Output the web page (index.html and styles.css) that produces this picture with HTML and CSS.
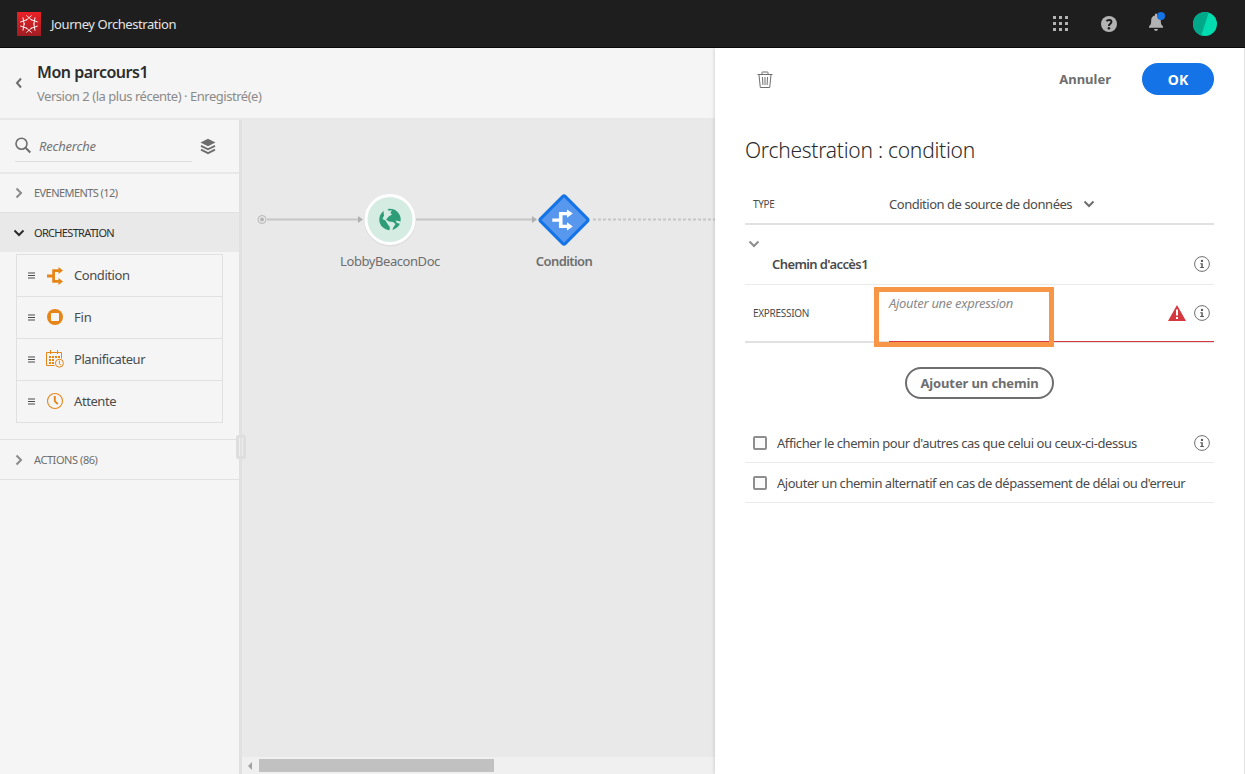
FILE: index.html
```html
<!DOCTYPE html>
<html lang="fr">
<head>
<meta charset="utf-8">
<title>Journey Orchestration</title>
<link rel="stylesheet" href="styles.css">
</head>
<body>
<svg class="defs" width="0" height="0">
  <symbol id="split" viewBox="0 0 18 18"><path d="M1 7.6h5.2V2.2h6.3V0L17 3.5 12.500 7V5H9v8h3.500v-2l4.500 3.500-4.500 3.500v-2.200H6.200v-5.400H1z"/></symbol>
  <symbol id="grip" viewBox="0 0 7 7"><path d="M0 1h7M0 3.500h7M0 6h7" stroke="#4b4b4b" stroke-width="1.100"/></symbol>
  <symbol id="info" viewBox="0 0 16 16"><circle cx="8" cy="8" r="7.400" fill="none" stroke="#6e6e6e"/><circle cx="8" cy="4.900" r="1.200" fill="#5a5a5a"/><path d="M6.200 7.200H8.800V11h1.100v1H6.200v-1h1.100V8.200H6.200z" fill="#5a5a5a"/></symbol>
  <symbol id="chev" viewBox="0 0 12 8"><path d="M1.500 1.500L6 6l4.500-4.500" fill="none" stroke="currentColor" stroke-width="2"/></symbol>
  <symbol id="chevr" viewBox="0 0 8 12"><path d="M1.500 1.500L6 6l-4.500 4.500" fill="none" stroke="currentColor" stroke-width="2"/></symbol>
</svg>
<header class="topbar">
  <svg class="logo" width="24" height="24" viewBox="0 0 24 24">
    <defs><linearGradient id="red" x1="0" y1="0" x2="0" y2="1"><stop offset="0" stop-color="#ed2127"/><stop offset="1" stop-color="#9f1d22"/></linearGradient></defs>
    <rect width="24" height="24" fill="url(#red)"/>
    <g fill="none" stroke="#fff" stroke-width=".85" stroke-linecap="round">
      <g id="arm"><path d="M9.600 3.700L14.700 8M14.400 3.700L9.300 8"/></g>
      <use href="#arm" transform="rotate(60 12 12)"/><use href="#arm" transform="rotate(120 12 12)"/><use href="#arm" transform="rotate(180 12 12)"/><use href="#arm" transform="rotate(240 12 12)"/><use href="#arm" transform="rotate(300 12 12)"/>
    </g>
  </svg>
  <span class="app-name">Journey Orchestration</span>
  <div class="tools">
    <svg width="16" height="16" viewBox="0 0 16 16" fill="#b3b3b3"><path d="M0 0h3v3H0zM6 0h3v3H6zM12 0h3v3h-3zM0 6h3v3H0zM6 6h3v3H6zM12 6h3v3h-3zM0 12h3v3H0zM6 12h3v3H6zM12 12h3v3h-3z"/></svg>
    <svg class="help" width="16" height="16" viewBox="0 0 16 16"><circle cx="8" cy="8" r="8" fill="#b3b3b3"/><path d="M5.500 5.200C6.700 3.400 10.400 3.400 10.400 5.900 10.400 7.700 7.900 7.900 7.900 10" fill="none" stroke="#1e1e1e" stroke-width="2"/><circle cx="7.900" cy="12.200" r="1.300" fill="#1e1e1e"/></svg>
    <svg class="bell" width="18" height="20" viewBox="0 0 18 20"><path d="M7 1.800h2v1.700c2.600.5 3.800 2.200 3.800 5 0 3.300.5 4.600 2.200 5.700v1.500H1v-1.500c1.700-1.100 2.200-2.400 2.200-5.700 0-2.800 1.200-4.500 3.800-5zM6 17h4c-.3 1.300-1 2-2 2s-1.700-.7-2-2z" fill="#b3b3b3"/><circle cx="13" cy="4" r="4" fill="#1473e6"/></svg>
    <svg class="avatar" width="24" height="24" viewBox="0 0 24 24"><circle cx="12" cy="12" r="12" fill="#00dcb0"/><path d="M15.800.6A12 12 0 1 0 8.200 23.400z" fill="#00a88a"/></svg>
  </div>
</header>
<div class="shell">
  <section class="work">
    <div class="journey-head">
      <svg class="back" width="8" height="12" viewBox="0 0 8 12"><path d="M6 1.500L2 6l4 4.500" fill="none" stroke="#6e6e6e" stroke-width="2"/></svg>
      <div class="titles"><h1>Mon parcours1</h1><p>Version 2 (la plus récente) · Enregistré(e)</p></div>
    </div>
    <div class="body">
      <aside class="sidebar">
        <div class="search">
          <div class="field">
            <svg width="17" height="17" viewBox="0 0 17 17" fill="none" stroke="#6e6e6e"><circle cx="6.500" cy="6.700" r="5.500" stroke-width="1.600"/><path d="M10.500 10.700l4.800 4.800" stroke-width="2"/></svg>
            <span class="ph">Recherche</span>
          </div>
          <svg class="layers" width="16" height="17" viewBox="0 0 16 17"><path d="M8 .8L15.500 4.500 8 8.200.5 4.500z" fill="#6e6e6e"/><path d="M1 7.900l7 3.400 7-3.400M1 11.700l7 3.400 7-3.400" fill="none" stroke="#6e6e6e" stroke-width="1.900"/></svg>
        </div>
        <div class="group events"><svg width="8" height="12"><use href="#chevr"/></svg><span>EVENEMENTS (12)</span></div>
        <div class="group open"><svg width="12" height="8"><use href="#chev"/></svg><span>ORCHESTRATION</span></div>
        <div class="list">
          <div class="item"><svg width="7" height="7"><use href="#grip"/></svg><svg class="ic" width="18" height="18" fill="#e68619"><use href="#split"/></svg><span>Condition</span></div>
          <div class="item"><svg width="7" height="7"><use href="#grip"/></svg><svg class="ic" width="18" height="18" viewBox="0 0 18 18"><circle cx="9" cy="9" r="8" fill="#e68619"/><rect x="5" y="5" width="8" height="8" rx=".8" fill="#f5f5f5"/></svg><span class="short">Fin</span></div>
          <div class="item"><svg width="7" height="7"><use href="#grip"/></svg><svg class="ic" width="18" height="18" viewBox="0 0 18 18"><path d="M8.500 15.500h-8v-13h15v6M4.500 0v4M11.500 0v4" fill="none" stroke="#e68619"/><path d="M3 6h2v2H3zM6 6h2v2H6zM9 6h2v2H9zM12 6h2v2h-2zM3 9h2v2H3zM6 9h2v2H6zM3 12h2v2H3zM6 12h2v2H6z" fill="#e68619"/><circle cx="13.400" cy="13.200" r="4" fill="#f5f5f5" stroke="#e68619"/><path d="M13.400 10.500v3l1.500 1.800" fill="none" stroke="#e68619"/></svg><span>Planificateur</span></div>
          <div class="item"><svg width="7" height="7"><use href="#grip"/></svg><svg class="ic" width="18" height="18" viewBox="0 0 18 18"><circle cx="9" cy="9" r="7.500" fill="none" stroke="#e68619" stroke-width="1.100"/><path d="M8.800 4v5.200l3 3" fill="none" stroke="#e68619" stroke-width="1.900"/></svg><span>Attente</span></div>
        </div>
        <div class="group actions"><svg width="8" height="12"><use href="#chevr"/></svg><span>ACTIONS (86)</span></div>
        <div class="handle"></div>
      </aside>
      <main class="canvas">
        <svg class="graph" width="473" height="637" viewBox="242 120 473 637">
          <g stroke="#c6c6c6" stroke-width="2"><path d="M267 219.500h93M415 219.500h118"/><path d="M593 219.500h122" stroke-dasharray="3 2"/></g>
          <circle cx="262" cy="219.500" r="4" fill="none" stroke="#b5b5b5"/><circle cx="262" cy="219.500" r="2" fill="#b5b5b5"/>
          <path d="M358 216l5 3.500-5 3.500zM532 216l5 3.500-5 3.500z" fill="#b0b0b0"/>
          <circle cx="390" cy="220.500" r="26" fill="#dedede"/><circle cx="390" cy="219.500" r="24" fill="#d5ece3" stroke="#fff" stroke-width="3"/>
          <circle cx="390" cy="219.500" r="10.700" fill="#2d9d78"/>
          <path d="M384 208h5l-1.500 2 2 .8 2.300-.8-1.300 3 1.500 1.500-3 1.800-3 3.200 3 2 4 .5 2.500 2-2.500 4-1 3.500h-2.500l.3-4.500-2.300-3-2-3.500-3-1.500 1.500-3.500-.5-4zM395.500 220.500l5.500 1-1 2.200-3-.7zM386.500 211.500l2 2-1.500 1.500z" fill="#d5ece3"/>
          <rect x="546.500" y="202.500" width="35" height="35" rx="2" transform="rotate(45 564 220)" fill="#5798ee" stroke="#1473e6" stroke-width="3"/>
          <g transform="translate(551 209.500) scale(1.280 1.170)" fill="#fff"><use href="#split" width="18" height="18"/></g>
        </svg>
        <span class="node-label beacon">LobbyBeaconDoc</span>
        <span class="node-label cond">Condition</span>
        <div class="scroll"><svg width="5" height="8" viewBox="0 0 5 8"><path d="M5 0v8L1 4z" fill="#a3a3a3"/></svg><div class="thumb"></div></div>
      </main>
    </div>
  </section>
  <section class="panel">
    <div class="actions-row">
      <svg class="trash" width="16" height="18" viewBox="0 0 16 18" fill="none" stroke="#6e6e6e"><path d="M.5 3.500h15M5 3V1.500Q5 1 5.500 1h5q.5 0 .5.500V3M2 4l1.300 12.500h9.400L14 4M5.500 6l.4 8M8 6v8M10.500 6l-.4 8"/></svg>
      <span class="cancel">Annuler</span><button class="ok">OK</button>
    </div>
    <h2>Orchestration : condition</h2>
    <div class="row type"><span class="label">TYPE</span><span class="value">Condition de source de données</span><svg width="12" height="8"><use href="#chev"/></svg></div>
    <div class="path"><svg width="12" height="8"><use href="#chev"/></svg><div class="path-line"><span class="path-name">Chemin d'accès1</span><svg width="16" height="16"><use href="#info"/></svg></div></div>
    <div class="row expr"><span class="label">EXPRESSION</span>
      <div class="input"><span class="ph2">Ajouter une expression</span>
        <svg class="warn" width="18" height="16" viewBox="0 0 18 16"><path d="M9 0l9 16H0z" fill="#d7373f"/><path d="M9 4.500v6M9 12v2" stroke="#fff" stroke-width="2"/></svg>
        <svg class="inf" width="16" height="16"><use href="#info"/></svg></div>
      <div class="focus"></div>
    </div>
    <button class="add">Ajouter un chemin</button>
    <div class="check first"><i></i><span>Afficher le chemin pour d'autres cas que celui ou ceux-ci-dessus</span><svg width="16" height="16"><use href="#info"/></svg></div>
    <div class="check alt"><i></i><span>Ajouter un chemin alternatif en cas de dépassement de délai ou d'erreur</span></div>
  </section>
</div>
</body>
</html>
```
FILE: styles.css
```css
* { box-sizing: border-box; }
body { margin: 0; width: 1245px; height: 774px; overflow: hidden; font: 13px/18px "Noto Sans", "Open Sans", sans-serif; letter-spacing: -.43px; color: #4b4b4b; background: #f5f5f5; }
h1, h2, p { margin: 0; }
svg { display: block; flex: none; }
span { white-space: nowrap; }
button { font-family: inherit; padding: 0; }
.defs { position: absolute; }
.topbar { height: 48px; background: #1e1e1e; border-bottom: 1px solid #080808; display: flex; align-items: center; padding: 0 28px 0 17px; }
.app-name { margin-left: 10px; color: #e4e4e4; }
.tools { margin-left: auto; display: flex; align-items: center; }
.help { margin-left: 32px; }
.bell { margin: -4px 0 0 31px; }
.avatar { margin-left: 27px; }
.shell { display: flex; height: 726px; }
.work { width: 715px; display: flex; flex-direction: column; }
.journey-head { height: 72px; border-bottom: 2px solid #e8e8e8; background: #f5f5f5; display: flex; padding: 13px 0 0 15px; }
.back { margin-top: 16px; }
.titles { margin-left: 14px; }
h1 { font-size: 16px; line-height: 22px; font-weight: 600; color: #2c2c2c; letter-spacing: -.46px; }
.titles p { color: #8a8a8a; margin-top: 4px; letter-spacing: -.47px; }
.body { flex: 1; display: flex; }
.sidebar { position: relative; z-index: 1; width: 242px; border-right: 3px solid #e1e1e1; background: #f5f5f5; }
.search { height: 54px; border-bottom: 2px solid #e8e8e8; display: flex; padding: 10px 0 0 15px; }
.field { width: 177px; height: 32px; border-bottom: 1px solid #dedede; display: flex; align-items: center; }
.ph { margin-left: 7px; font-style: italic; color: #747474; letter-spacing: -.2px; }
.layers { margin: 8px 0 0 8px; }
.group { display: flex; align-items: center; height: 39px; padding-left: 15px; font-size: 11px; color: #6e6e6e; }
.group span { margin-left: 11px; }
.events { border-bottom: 1px solid #e1e1e1; letter-spacing: -.56px; }
.events svg, .actions svg { color: #8a8a8a; }
.open { background: #e9e9e9; padding-left: 13px; color: #2c2c2c; letter-spacing: -.67px; }
.open span { margin-left: 9px; }
.list { margin: 2px 16px 0; border: 1px solid #e1e1e1; }
.item { height: 42px; display: flex; align-items: center; padding: 0 0 1px 11px; border-top: 1px solid #e1e1e1; }
.item:first-child { border-top: 0; height: 41px; padding-bottom: 0; }
.item span { margin-top: -1px; }
.ic { margin: 0 10px 0 11px; }
.short { letter-spacing: -.2px; }
.actions { margin-top: 16px; height: 41px; border-top: 1px solid #e1e1e1; border-bottom: 1px solid #e1e1e1; }
.handle { position: absolute; left: 236px; top: 315px; width: 10px; height: 24px; border-radius: 2px; background: #e1e1e1; border: 3px solid #dedede; box-shadow: inset 1px 0 #eee, inset -1px 0 #eee; }
.canvas { position: relative; width: 473px; background: #e9e9e9; }
.node-label { position: absolute; top: 132px; transform: translateX(-50%); color: #6e6e6e; }
.beacon { left: 148px; }
.cond { left: 322px; font-weight: 600; letter-spacing: -.58px; }
.scroll { height: 17px; background: #f0f0f0; display: flex; align-items: center; padding-left: 5px; }
.thumb { width: 235px; height: 13px; margin-left: 7px; background: #c1c1c1; }
.panel { position: relative; z-index: 1; width: 530px; background: #fff; border-right: 1px solid #e1e1e1; box-shadow: -1px 0 3px rgba(0,0,0,.12); padding: 15px 30px 0; display: flex; flex-direction: column; clip-path: inset(0 0 0 -6px); }
.actions-row { height: 32px; display: flex; align-items: center; padding-left: 12px; }
.trash { margin-top: 2px; }
.cancel { margin-left: auto; font-weight: 700; color: #6e6e6e; letter-spacing: 0; }
.ok { width: 72px; height: 32px; border: 0; border-radius: 16px; background: #1473e6; color: #fff; font-size: 14px; font-weight: 700; margin-left: 31px; }
h2 { margin-top: 39px; font-size: 21px; line-height: 32px; font-weight: 300; color: #2c2c2c; letter-spacing: -.26px; }
.row { position: relative; display: flex; align-items: center; border-bottom: 2px solid #e1e1e1; }
.label { width: 144px; padding-left: 8px; font-size: 10px; letter-spacing: -.3px; }
.type { height: 40px; margin-top: 19px; padding-bottom: 1px; }
.type svg { margin-left: 11px; color: #6e6e6e; }
.value { letter-spacing: -.47px; }
.path { height: 60px; padding: 15px 0 0 3px; border-bottom: 1px solid #eaeaea; color: #8e8e8e; }
.path-line { display: flex; align-items: center; justify-content: space-between; padding: 7px 4px 0 24px; }
.path-name { font-weight: 600; color: #4b4b4b; letter-spacing: -.6px; }
.expr { height: 58px; }
.input { width: 325px; height: 57px; margin-bottom: -1px; border-bottom: 1px solid #d7373f; display: flex; padding: 9px 4px 0 0; align-self: flex-start; }
.ph2 { font-style: italic; color: #8a8a8a; letter-spacing: -.31px; }
.warn { margin: 11px 8px 0 auto; }
.inf { margin-top: 11px; }
.focus { position: absolute; left: 129px; top: 2px; width: 180px; height: 60px; border: 5px solid #f79646; }
.add { align-self: center; width: 149px; height: 32px; margin-top: 24px; border: 2px solid #6e6e6e; border-radius: 16px; background: #fff; color: #6e6e6e; font-size: 13px; font-weight: 700; letter-spacing: -.12px; }
.check { height: 40px; display: flex; align-items: center; border-bottom: 1px solid #eaeaea; padding: 0 4px 0 8px; }
.check i { flex: none; width: 14px; height: 14px; border: 2px solid #8e8e8e; border-radius: 2px; background: #fafafa; margin-right: 10px; }
.check svg { margin-left: auto; }
.first { margin-top: 24px; letter-spacing: -.44px; }
.alt { letter-spacing: -.47px; }
```
